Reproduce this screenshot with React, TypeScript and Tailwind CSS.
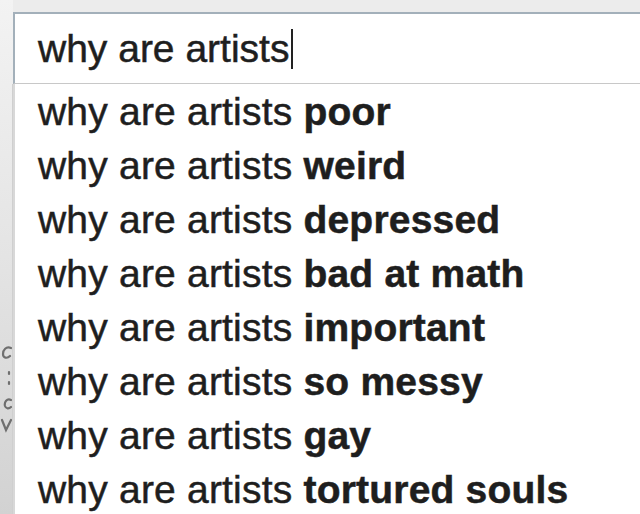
import React from 'react';

const suggestions = [
    'poor',
    'weird',
    'depressed',
    'bad at math',
    'important',
    'so messy',
    'gay',
    'tortured souls',
];

export default function App() {
    return (
        <div
            className="w-[640px] h-[514px] overflow-hidden bg-[#ececec] flex text-[#1e1e1e]"
            style={{ fontFamily: '"Liberation Sans", Arial, sans-serif' }}
        >
            {/* page content peeking out on the left */}
            <div className="w-[13px] shrink-0 flex flex-col pt-[84px] bg-gradient-to-b from-[#f3f3f3] via-[#e4e4e4] to-[#d2d2d2]">
                <div className="flex-1 border-r border-[#cfcfcf] pt-[256px]">
                    <svg width="12" height="110" viewBox="0 0 12 110" fill="none" stroke="#6f6f6f" strokeWidth="2.2" strokeLinecap="round">
                        <path d="M11 8 C6 6 3 10 3 14 C3 18 7 19 10 16" />
                        <path d="M9 32 L9 34" />
                        <path d="M9 42 L9 44" />
                        <path d="M11 60 C7 58 4 62 5 66 C6 69 9 69 11 67" />
                        <path d="M2 80 L6 90 L11 80" />
                    </svg>
                </div>
            </div>

            <div className="flex-1 flex flex-col pt-[12px] min-w-0">
                <div className="h-[72px] shrink-0 bg-white border-t-2 border-l-2 border-[#a3b0ba] border-b border-b-[#c8c8c8] flex items-center pl-[23px]">
                    <span className="text-[39px] leading-none whitespace-nowrap [-webkit-text-stroke:0.5px_#1e1e1e]">why are artists</span>
                    <span className="w-[2px] h-[40px] bg-[#222] ml-[2px]" />
                </div>
                <div className="flex-1 bg-white border-l-2 border-[#d8d8d8] pl-[23px]">
                    {suggestions.map((s) => (
                        <div key={s} className="h-[54px] flex items-center text-[39px] leading-none whitespace-nowrap tracking-[0.2px] [-webkit-text-stroke:0.5px_#1e1e1e]">
                            <span>why are artists&nbsp;</span>
                            <span className="font-bold">{s}</span>
                        </div>
                    ))}
                </div>
            </div>
        </div>
    );
}
